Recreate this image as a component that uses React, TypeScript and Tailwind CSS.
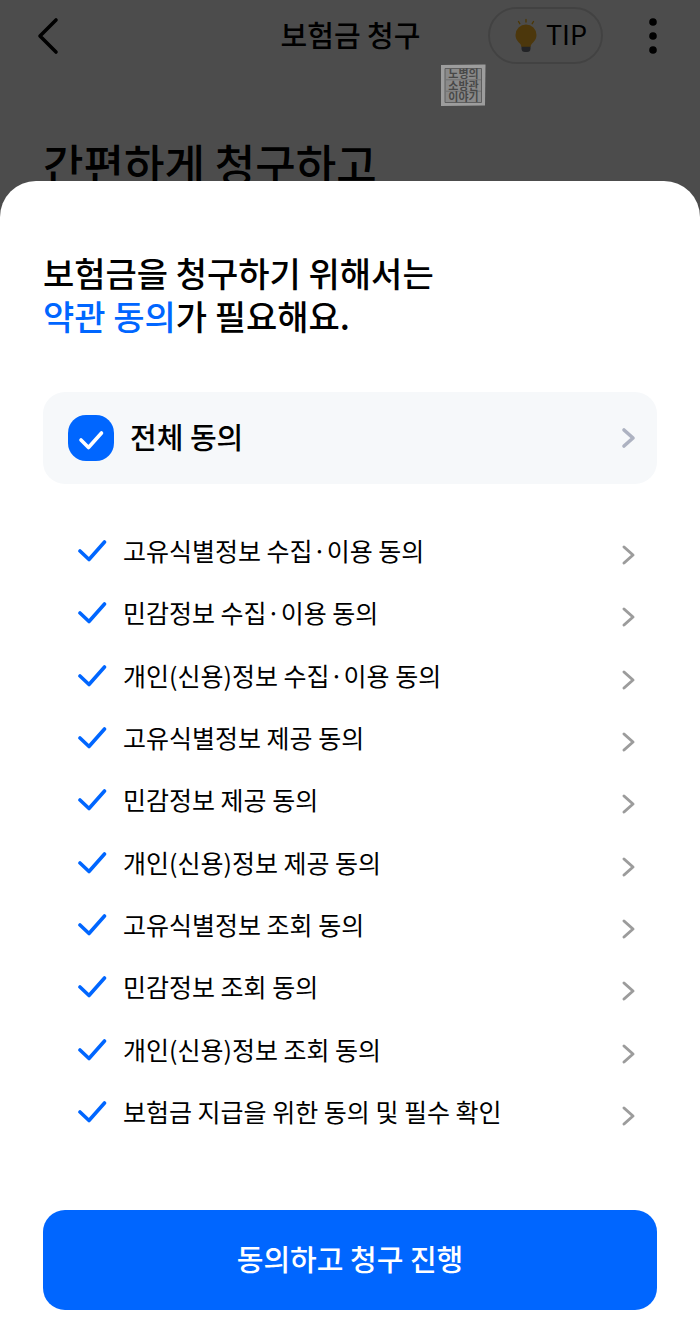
import { useState } from 'react';

const terms = [
  '고유식별정보 수집·이용 동의',
  '민감정보 수집·이용 동의',
  '개인(신용)정보 수집·이용 동의',
  '고유식별정보 제공 동의',
  '민감정보 제공 동의',
  '개인(신용)정보 제공 동의',
  '고유식별정보 조회 동의',
  '민감정보 조회 동의',
  '개인(신용)정보 조회 동의',
  '보험금 지급을 위한 동의 및 필수 확인',
];

function BulbIcon() {
  return (
    <svg width="24" height="36" viewBox="0 0 24 36" fill="none" aria-hidden="true">
      <path d="M4.500 3.500l1.300 2.200M12 1.500v2.500M19.500 3.500l-1.300 2.200" stroke="#fdb913" strokeWidth="1.400" strokeLinecap="round" />
      <path d="M7.500 28v2.500a3.500 3.500 0 0 0 3.500 3.500h2a3.500 3.500 0 0 0 3.500-3.500V28z" fill="#73757f" />
      <path d="M12 6.500A10.500 10.500 0 0 1 22.500 17c0 4.600-2.700 6.800-4.600 8.800-.9 1-1.100 2-1.200 3H7.300c-.1-1-.3-2-1.200-3C4.200 23.800 1.500 21.600 1.500 17A10.500 10.500 0 0 1 12 6.500z" fill="#fdb92a" />
    </svg>
  );
}

function Stamp() {
  return (
    <svg className="absolute top-16 left-[63%] z-10" width="45" height="43" viewBox="0 0 45 43" role="img" aria-label="노병의 소방관 이야기">
      <path d="M0 1L44.500 .5 44 41.500 0 42z" fill="#9d9d9d" />
      <path d="M4 4.500h36.500v34H4z" fill="#8a8a8a" stroke="#5e5e5e" />
      <path d="M5 15.800h35M5 27.200h35" stroke="#6a6a6a" strokeWidth=".8" />
      <g fill="#484848" fontSize="11" fontWeight="700" textAnchor="middle">
        <text x="22.500" y="14">노병의</text>
        <text x="22.500" y="25.500">소방관</text>
        <text x="22.500" y="37">이야기</text>
      </g>
    </svg>
  );
}

function Chevron({ className }: { className: string }) {
  return (
    <svg className={className} width="16" height="22" viewBox="0 0 16 22" fill="none" stroke="currentColor" strokeLinecap="round" strokeLinejoin="round" aria-hidden="true">
      <path d="M3 3l9 8-9 8" />
    </svg>
  );
}

export default function App() {
  const [checked, setChecked] = useState<boolean[]>(terms.map(() => true));
  const all = checked.every(Boolean);

  const toggle = (index: number) => setChecked(checked.map((value, i) => (i === index ? !value : value)));

  return (
    <div className="relative flex min-h-screen flex-col bg-white font-['Noto_Sans_CJK_KR',sans-serif] text-black">
      {/* Page behind the sheet */}
      <header className="grid h-[71px] grid-cols-[1fr_auto_1fr] items-center pr-[35px] pl-9">
        <button type="button" aria-label="뒤로" className="justify-self-start">
          <svg width="24" height="38" viewBox="0 0 24 38" fill="none" stroke="currentColor" strokeWidth="3.600" strokeLinecap="round" strokeLinejoin="round">
            <path d="M20 3L4 19l16 16" />
          </svg>
        </button>
        <p className="pb-1 text-[29px] leading-10 font-medium">보험금 청구</p>
        <div className="flex items-center justify-end gap-[38px]">
          <button type="button" className="flex h-[57px] w-[115px] items-center justify-center gap-2 rounded-full border-2 border-[#dedede] pl-2.5 text-[27px] leading-10">
            <BulbIcon />
            <span className="pb-1">TIP</span>
          </button>
          <button type="button" aria-label="메뉴">
            <svg width="24" height="38" viewBox="0 0 24 38" fill="currentColor">
              <circle cx="12" cy="5" r="3.800" />
              <circle cx="12" cy="19" r="3.800" />
              <circle cx="12" cy="33" r="3.800" />
            </svg>
          </button>
        </div>
      </header>
      <h1 className="mt-[66px] px-[43px] text-[44px] leading-[52px] font-medium">간편하게 청구하고</h1>
      <div className="absolute inset-0 bg-black/70" />
      <Stamp />

      {/* Bottom sheet */}
      <section className="relative z-10 -mt-2 flex flex-1 flex-col rounded-t-[36px] bg-white px-[43px] pt-[70px] pb-[22px]">
        <h2 className="text-[34px] leading-[43px] font-medium">
          보험금을 청구하기 위해서는
          <br />
          <span className="text-[#0066ff]">약관 동의</span>가 필요해요.
        </h2>

        <div className="mt-[55px] flex h-[92px] items-center justify-between rounded-[22px] bg-[#f6f8fa] pr-5 pl-[25px]">
          <label className="flex items-center gap-4 text-[29px] leading-10 font-medium">
            <span className="grid">
              <input
                type="checkbox"
                checked={all}
                onChange={() => setChecked(terms.map(() => !all))}
                className="size-[46px] appearance-none rounded-[18px] bg-[#c9ced6] [grid-area:1/1] checked:bg-[#0066ff]"
              />
              <svg className="pointer-events-none text-white [grid-area:1/1]" width="46" height="46" viewBox="0 0 46 46" fill="none" stroke="currentColor" strokeWidth="3.600" strokeLinecap="round" strokeLinejoin="round" aria-hidden="true">
                <path d="M13 25l7.500 7.500L33.500 18" />
              </svg>
            </span>
            <span className="pb-1">전체 동의</span>
          </label>
          <button type="button" aria-label="전체 동의 보기">
            <Chevron className="stroke-[3.6] text-[#adb2c1]" />
          </button>
        </div>

        <ul className="mt-9 grid flex-1 auto-rows-fr">
          {terms.map((term, i) => (
            <li key={term} className="flex items-center justify-between pr-5 pl-[34px]">
              <label className="flex items-center gap-4 text-[25px] leading-9">
                <span className="grid">
                  <input
                    type="checkbox"
                    checked={checked[i]}
                    onChange={() => toggle(i)}
                    className="peer h-7 w-[30px] appearance-none [grid-area:1/1]"
                  />
                  <svg className="pointer-events-none text-[#c9ced6] [grid-area:1/1] peer-checked:text-[#0066ff]" width="30" height="28" viewBox="0 0 30 28" fill="none" stroke="currentColor" strokeWidth="3.600" strokeLinecap="round" strokeLinejoin="round" aria-hidden="true">
                    <path d="M3 14l9 8.500L27.500 5" />
                  </svg>
                </span>
                <span className="pb-0.5">{term}</span>
              </label>
              <button type="button" aria-label={`${term} 보기`} className="pt-2">
                <Chevron className="stroke-3 text-[#9c9c9c]" />
              </button>
            </li>
          ))}
        </ul>

        <button type="button" className="mt-[67px] h-[100px] rounded-[22px] bg-[#0066ff] pb-0.5 text-[29px] font-medium text-white">
          동의하고 청구 진행
        </button>
      </section>
    </div>
  );
}
